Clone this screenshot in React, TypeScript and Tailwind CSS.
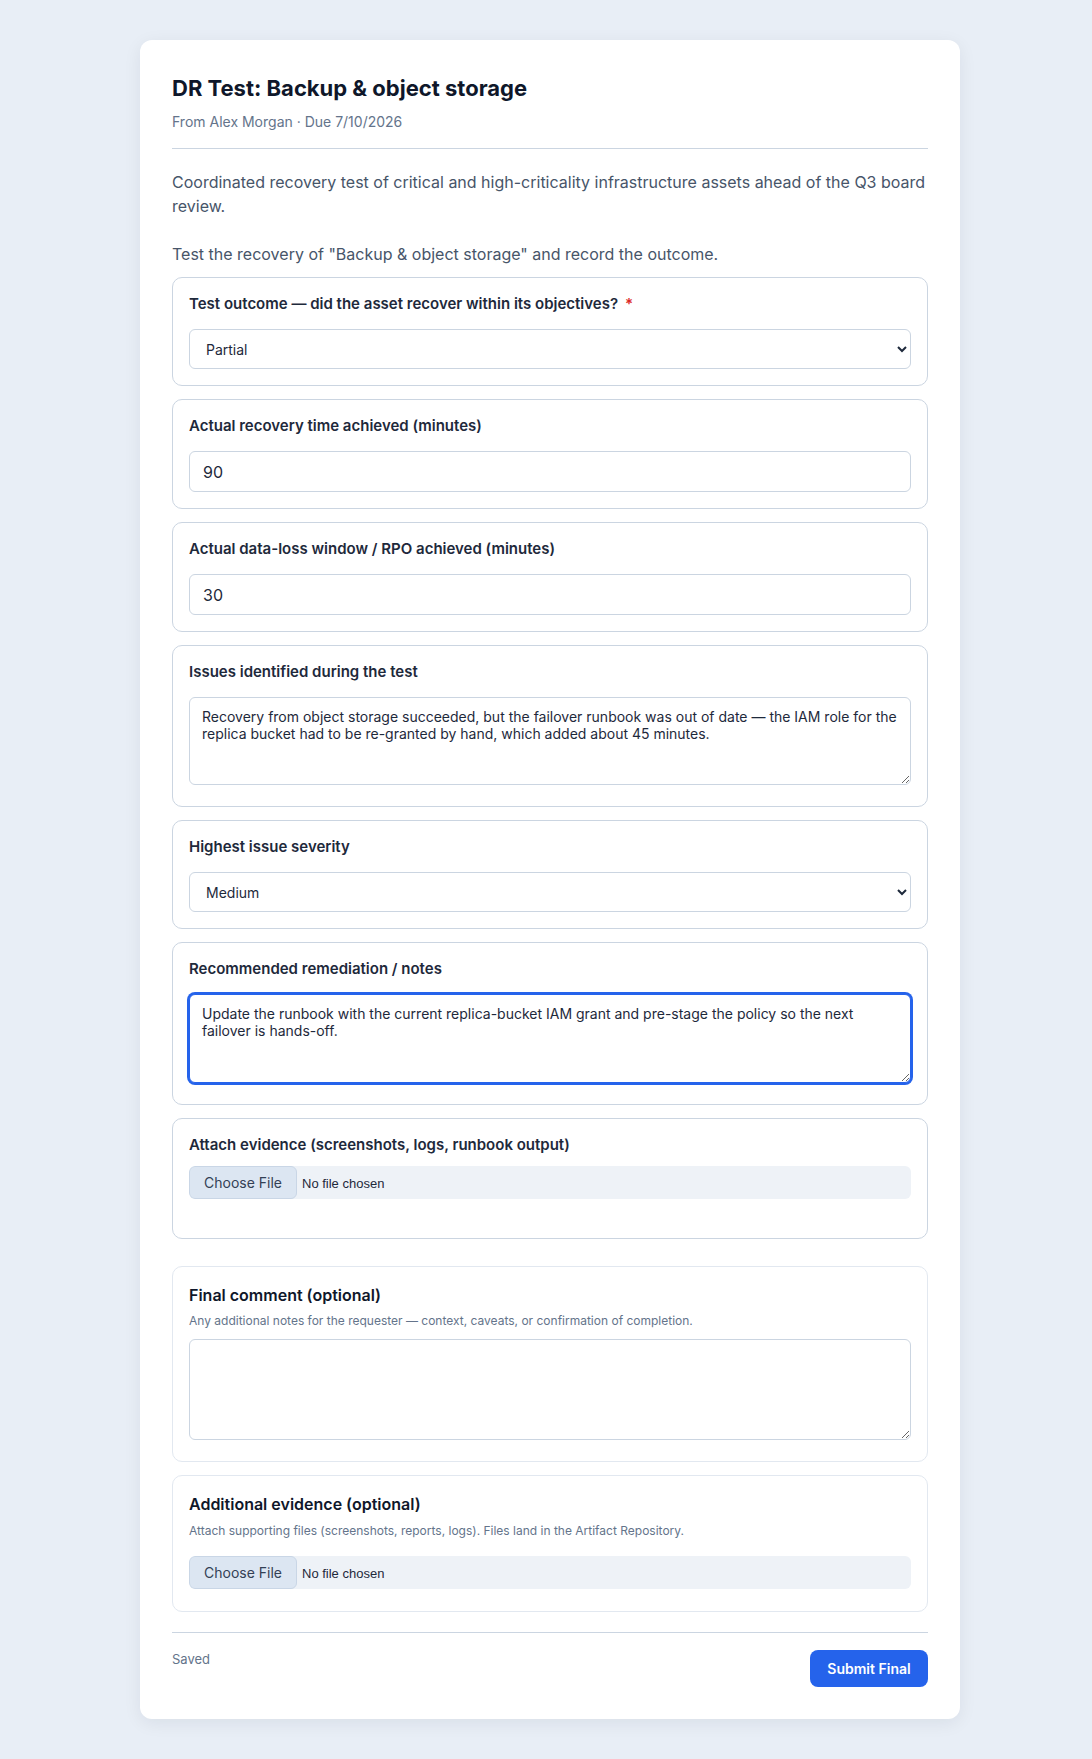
import React from "react";

function Section({ children }: { children: React.ReactNode }) {
  return (
    <div className="rounded-[10px] border border-[#cbd5e1] bg-white px-4 pt-4 pb-4">
      {children}
    </div>
  );
}

function Label({ children, required, mb = "mb-[15px]" }: { children: React.ReactNode; required?: boolean; mb?: string }) {
  return (
    <label className={`block text-[15px] leading-5 font-semibold text-[#1e293b] ${mb}`}>
      {children}
      {required && <span className="ml-[7px] text-[#dc2626]">*</span>}
    </label>
  );
}

const fileCls =
  "block h-[33px] w-full rounded-md bg-[#eef2f7] font-['Liberation_Sans',Arial,sans-serif] text-[13px] text-[#1e293b] file:mr-[5px] file:h-[33px] file:w-[108px] file:rounded-md file:border file:border-[#c9d6e6] file:bg-[#dce6f2] file:font-['Inter',sans-serif] file:text-sm file:text-[#334155]";

export default function App() {
  return (
    <div className="min-h-screen bg-[#e8eef6] py-10 font-['Inter',sans-serif]">
      <div className="ml-[140px] w-[820px] rounded-xl bg-white px-8 pt-8 pb-8 shadow-[0_4px_18px_rgba(15,23,42,0.07)]">
        <div className="border-b border-[#cbd5e1] pb-4">
          <h1 className="text-[22px] leading-[32px] font-bold text-[#0f172a]">DR Test: Backup &amp; object storage</h1>
          <p className="mt-[8px] text-sm leading-5 text-[#64748b]">From Alex Morgan · Due 7/10/2026</p>
        </div>

        <p className="mt-[21px] text-base leading-6 text-[#475569]">
          Coordinated recovery test of critical and high-criticality infrastructure assets ahead of the Q3 board review.
        </p>
        <p className="mt-6 text-base leading-6 text-[#475569]">
          Test the recovery of "Backup &amp; object storage" and record the outcome.
        </p>

        <div className="mt-[11px] flex flex-col gap-[13px]">
          <Section>
            <Label required>Test outcome — did the asset recover within its objectives?</Label>
            <select
              defaultValue="Partial"
              className="block h-[40px] w-full rounded-md border border-[#cbd5e1] bg-white px-3 text-sm text-[#1e293b]"
            >
              <option>Pass</option>
              <option>Partial</option>
              <option>Fail</option>
            </select>
          </Section>

          <Section>
            <Label>Actual recovery time achieved (minutes)</Label>
            <input
              type="text"
              defaultValue="90"
              className="block h-[41px] w-full rounded-md border border-[#cbd5e1] bg-white px-[13px] text-base text-[#1e293b]"
            />
          </Section>

          <Section>
            <Label>Actual data-loss window / RPO achieved (minutes)</Label>
            <input
              type="text"
              defaultValue="30"
              className="block h-[41px] w-full rounded-md border border-[#cbd5e1] bg-white px-[13px] text-base text-[#1e293b]"
            />
          </Section>

          <Section>
            <Label>Issues identified during the test</Label>
            <textarea
              defaultValue="Recovery from object storage succeeded, but the failover runbook was out of date — the IAM role for the replica bucket had to be re-granted by hand, which added about 45 minutes."
              className="mb-[5px] block h-[88px] w-full resize-y rounded-md border border-[#cbd5e1] bg-white px-3 py-[10px] text-sm leading-[17px] text-[#1e293b]"
            />
          </Section>

          <Section>
            <Label>Highest issue severity</Label>
            <select
              defaultValue="Medium"
              className="block h-[40px] w-full rounded-md border border-[#cbd5e1] bg-white px-3 text-sm text-[#1e293b]"
            >
              <option>Low</option>
              <option>Medium</option>
              <option>High</option>
              <option>Critical</option>
            </select>
          </Section>

          <Section>
            <Label>Recommended remediation / notes</Label>
            <textarea
              defaultValue="Update the runbook with the current replica-bucket IAM grant and pre-stage the policy so the next failover is hands-off."
              className="mb-[5px] block h-[89px] w-full resize-y rounded-md border border-[#2563eb] bg-white px-3 py-[10px] text-sm leading-[17px] text-[#1e293b] outline-none ring-2 ring-[#2563eb]"
            />
          </Section>

          <Section>
            <Label mb="mb-[11px]">Attach evidence (screenshots, logs, runbook output)</Label>
            <div className="mb-[23px]">
              <input type="file" className={fileCls} />
            </div>
          </Section>
        </div>

        <div className="mt-[27px] rounded-[10px] border border-[#e2e8f0] bg-white p-4">
          <h2 className="text-base leading-6 font-semibold text-[#0f172a]">Final comment (optional)</h2>
          <p className="mt-1.5 text-xs leading-4 text-[#64748b]">
            Any additional notes for the requester — context, caveats, or confirmation of completion.
          </p>
          <textarea className="mt-2.5 mb-[5px] block h-[101px] w-full resize-y rounded-md border border-[#cbd5e1] bg-white px-3 py-[10px] text-sm leading-[17px] text-[#1e293b]" />
        </div>

        <div className="mt-[13px] rounded-[10px] border border-[#e2e8f0] bg-white p-4">
          <h2 className="text-base leading-6 font-semibold text-[#0f172a]">Additional evidence (optional)</h2>
          <p className="mt-[7px] text-xs leading-4 text-[#64748b]">
            Attach supporting files (screenshots, reports, logs). Files land in the Artifact Repository.
          </p>
          <div className="mt-[17px] mb-[6px]">
            <input type="file" className={fileCls} />
          </div>
        </div>

        <div className="mt-5 flex items-start justify-between border-t border-[#cbd5e1] pt-[17px]">
          <span className="text-[13px] leading-[18px] text-[#64748b]">Saved</span>
          <button className="flex h-[37px] w-[118px] items-center justify-center rounded-lg bg-[#2563eb] text-sm font-semibold text-white">
            Submit Final
          </button>
        </div>
      </div>
    </div>
  );
}
